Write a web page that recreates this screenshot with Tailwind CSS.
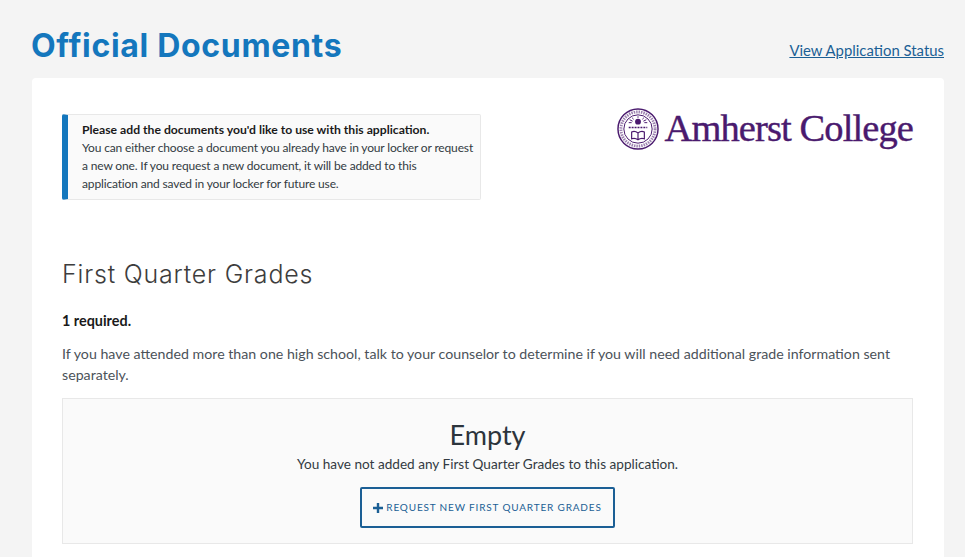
<!DOCTYPE html>
<html lang="en">
<head>
    <meta charset="UTF-8">
    <title>Official Documents</title>
    <script src="https://cdn.jsdelivr.net/npm/@tailwindcss/browser@4"></script>
</head>
<body class="bg-[#f4f4f4] h-[557px] overflow-hidden font-['Lato','Open_Sans',sans-serif] text-[#3d4650]">
    <div class="pl-[32px] pr-[21px] pt-[25px]">
        <div class="flex justify-between items-end h-[53px]">
            <h1 class="font-['Inter',sans-serif] font-bold text-[32px] leading-[42px] tracking-[0.68px] ml-[-1px] text-[#1477bd] self-start">Official Documents</h1>
            <a href="#" class="text-[14.9px] leading-[20px] text-[#1b5f95] underline mb-[18px]">View Application Status</a>
        </div>
        <div class="bg-white rounded-[4px] h-[600px] pl-[30px] pr-[31px] pt-[36px]">
            <div class="flex justify-between items-start">
                <div class="w-[419px] h-[86px] bg-[#fafafa] border border-[#e8e8e8] border-l-[6px] border-l-[#1477bd] rounded-[2px] pl-[14px] pr-[6px] pt-[6px] text-[12px] leading-[18px] tracking-[-0.15px] text-[#333a42]">
                    <p class="font-bold text-[12.2px] tracking-normal text-[#1a1a1a] whitespace-nowrap">Please add the documents you'd like to use with this application.</p>
                    <p>You can either choose a document you already have in your locker or request a new one. If you request a new document, it will be added to this application and saved in your locker for future use.</p>
                </div>
                <div class="flex items-center gap-[6px] mt-[-7px]">
                    <svg width="42" height="42" viewBox="0 0 43 43" fill="none" stroke="#4a1a6e">
                        <circle cx="21.5" cy="21.5" r="20.5" stroke-width="1.5"/>
                        <circle cx="21.5" cy="21.5" r="14.5" stroke-width="1"/>
                        <circle cx="21.5" cy="21.5" r="17.5" stroke-width="3" stroke-dasharray="1.5 1" opacity="0.55"/>
                        <circle cx="21.5" cy="14" r="3" fill="#4a1a6e" stroke="none"/>
                        <path d="M21.5 8.500V10M15.500 10l1.500 1.500M27.500 10L26 11.500M12 15h3M31 15h-3M13 12l3 1.500M30 12l-3 1.500" stroke-width="1"/>
                        <path d="M12 20h19" stroke-width="1.500" stroke-dasharray="2 1"/>
                        <path d="M15 24.500c2.500-1 4.500-.5 6.500 1 2-1.500 4-2 6.500-1v7c-2.500-1-4.500-.5-6.500 1-2-1.500-4-2-6.500-1zM21.500 25.500v7" stroke-width="1.200"/>
                    </svg>
                    <span class="font-['Liberation_Serif',serif] text-[38.5px] leading-[43px] tracking-[-0.9px] text-[#4a1a6e] [-webkit-text-stroke:0.4px_#4a1a6e] whitespace-nowrap">Amherst College</span>
                </div>
            </div>
            <h2 class="font-['Inter',sans-serif] font-light text-[25px] leading-[30px] tracking-[0.8px] text-[#3d3d3d] mt-[59px]">First Quarter Grades</h2>
            <p class="font-bold text-[14.4px] leading-[20px] text-[#1a1a1a] mt-[22px]">1 required.</p>
            <p class="text-[14.2px] leading-[21px] text-[#4b5259] mt-[12px]">If you have attended more than one high school, talk to your counselor to determine if you will need additional grade information sent separately.</p>
            <div class="mt-[13px] h-[146px] bg-[#fafafa] border border-[#e8e8e8] flex flex-col items-center pt-[19px]">
                <h3 class="text-[27px] leading-[34px] text-[#2c343c]">Empty</h3>
                <p class="text-[13.6px] leading-[20px] text-[#333a42] mt-[2px]">You have not added any First Quarter Grades to this application.</p>
                <a href="#" class="mt-[13px] w-[255px] h-[41px] border-2 border-[#1b5f95] rounded-[2px] flex items-center justify-center gap-[3px] text-[#1b5f95] text-[10px] tracking-[0.83px] uppercase whitespace-nowrap">
                    <svg width="10" height="10" viewBox="0 0 10 10" fill="#1b5f95"><path d="M3.800 0h2.400v3.800H10v2.400H6.200V10H3.800V6.200H0V3.800h3.800z"/></svg>
                    <span>Request new First Quarter Grades</span>
                </a>
            </div>
        </div>
    </div>
</body>
</html>
